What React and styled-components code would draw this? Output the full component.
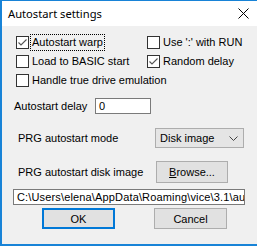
import React from 'react';
import styled, { createGlobalStyle } from 'styled-components';

const GlobalStyle = createGlobalStyle`
  html, body {
    margin: 0;
    padding: 0;
    background: #f0f0f0;
  }
  body {
    font-family: "Liberation Sans", Arial, sans-serif;
    font-size: 11px;
    color: #000;
  }
`;

const Window = styled.div`
  width: 257px;
  height: 246px;
  box-sizing: border-box;
  border-top: 1px solid #1883d7;
  border-left: 2px solid #1883d7;
  border-bottom: 2px solid #1883d7;
  background: #f0f0f0;
  display: flex;
  flex-direction: column;
  overflow: hidden;
`;

const TitleBar = styled.div`
  height: 25px;
  flex: none;
  background: #fff;
  display: flex;
  align-items: center;
  justify-content: space-between;
  padding: 0 8px 0 6px;
  font-family: "Noto Sans", "Open Sans", sans-serif;
  font-size: 11.2px;
`;

const CloseIcon = () => (
  <svg width="11" height="11" viewBox="0 0 11 11">
    <path d="M0.5 0.5L10.5 10.5M10.5 0.5L0.5 10.5" stroke="#000" strokeWidth="1" />
  </svg>
);

const Body = styled.div`
  flex: 1;
  display: flex;
  flex-direction: column;
  padding-top: 10px;
`;

const CheckGrid = styled.div`
  display: grid;
  grid-template-columns: 131px 1fr;
  grid-auto-rows: 14px;
  row-gap: 5px;
  padding-left: 14px;
`;

const CheckRow = styled.label`
  display: flex;
  align-items: center;
  gap: 1px;
  height: 13px;
  white-space: nowrap;
  grid-column: ${({ $span }) => ($span ? '1 / span 2' : 'auto')};
`;

const Box = styled.span`
  width: 13px;
  height: 13px;
  box-sizing: border-box;
  border: 1px solid #333;
  background: #fff;
  flex: none;
  display: flex;
  align-items: center;
  justify-content: center;
`;

const CheckText = styled.span`
  padding: 1px 1px;
  border: 1px dotted ${({ $focused }) => ($focused ? '#000' : 'transparent')};
  line-height: 13px;
`;

const Check = ({ label, checked, focused, span }) => (
  <CheckRow $span={span}>
    <Box>
      {checked && (
        <svg width="11" height="11" viewBox="0 0 11 11">
          <polyline points="1.5,5.5 4,8 9.5,2.5" fill="none" stroke="#555" strokeWidth="1.1" />
        </svg>
      )}
    </Box>
    <CheckText $focused={focused}>{label}</CheckText>
  </CheckRow>
);

const Row = styled.div`
  display: flex;
  align-items: center;
  padding-left: ${({ $indent }) => $indent}px;
  margin-top: ${({ $top }) => $top}px;
`;

const Label = styled.span`
  width: ${({ $width }) => $width}px;
  flex: none;
  white-space: nowrap;
`;

const TextInput = styled.div`
  width: ${({ $width }) => $width}px;
  height: 16px;
  box-sizing: border-box;
  border: 1px solid #7a7a7a;
  background: #fff;
  padding: 0 3px;
  line-height: 14px;
  white-space: nowrap;
  overflow: hidden;
`;

const PathText = styled.span`
  letter-spacing: 0.15px;
`;

const Select = styled.div`
  width: 89px;
  height: 20px;
  box-sizing: border-box;
  border: 1px solid #adadad;
  background: #e5e5e5;
  display: flex;
  align-items: center;
  justify-content: space-between;
  padding: 0 5px 0 4px;
`;

const Button = styled.div`
  width: ${({ $width }) => $width}px;
  height: ${({ $height }) => $height}px;
  box-sizing: border-box;
  border: ${({ $default }) => ($default ? '2px solid #0078d7' : '1px solid #adadad')};
  background: #e1e1e1;
  display: flex;
  align-items: center;
  justify-content: center;
`;

const Buttons = styled.div`
  display: flex;
  gap: 39px;
  padding-left: 40px;
  margin-top: 3px;
`;

const Underline = styled.span`
  text-decoration: underline;
`;

export default function App() {
  return (
    <>
      <GlobalStyle />
      <Window>
        <TitleBar>
          <span>Autostart settings</span>
          <CloseIcon />
        </TitleBar>
        <Body>
          <CheckGrid>
            <Check label="Autostart warp" checked focused />
            <Check label="Use ':' with RUN" />
            <Check label="Load to BASIC start" />
            <Check label="Random delay" checked />
            <Check label="Handle true drive emulation" span />
          </CheckGrid>
          <Row $indent={12} $top={10}>
            <Label $width={81}>Autostart delay</Label>
            <TextInput $width={56}>0</TextInput>
          </Row>
          <Row $indent={16} $top={14}>
            <Label $width={137}>PRG autostart mode</Label>
            <Select>
              <span>Disk image</span>
              <svg width="9" height="5" viewBox="0 0 9 5">
                <polyline points="0.5,0.5 4.5,4.5 8.5,0.5" fill="none" stroke="#444" strokeWidth="1" />
              </svg>
            </Select>
          </Row>
          <Row $indent={16} $top={13}>
            <Label $width={138}>PRG autostart disk image</Label>
            <Button $width={72} $height={22}>
              <span><Underline>B</Underline>rowse...</span>
            </Button>
          </Row>
          <Row $indent={11} $top={6}>
            <TextInput $width={232}>
              <PathText>C:\Users\elena\AppData\Roaming\vice\3.1\autostart.d64</PathText>
            </TextInput>
          </Row>
          <Buttons>
            <Button $width={73} $height={21} $default>OK</Button>
            <Button $width={73} $height={21}>Cancel</Button>
          </Buttons>
        </Body>
      </Window>
    </>
  );
}
